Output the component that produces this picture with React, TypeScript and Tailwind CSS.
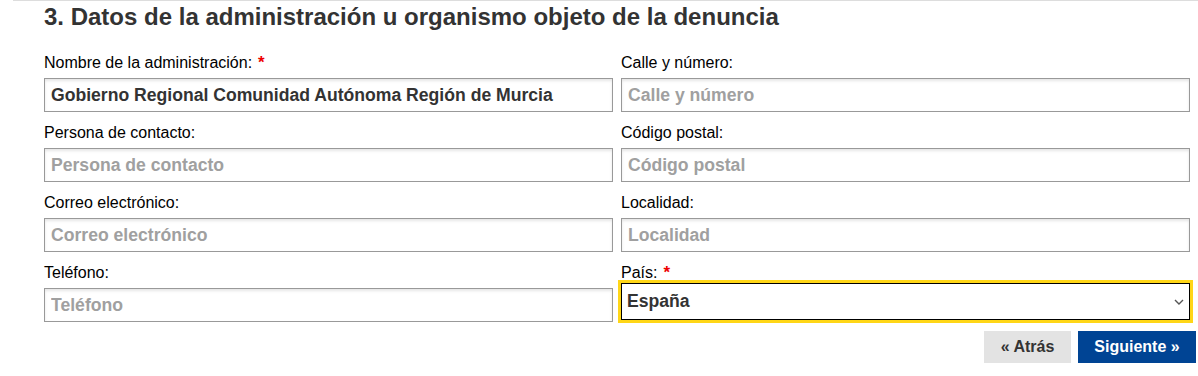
import React from 'react';

type Field = { label: string; value?: string; required?: boolean };

const leftFields: Field[] = [
  { label: 'Nombre de la administración:', value: 'Gobierno Regional Comunidad Autónoma Región de Murcia', required: true },
  { label: 'Persona de contacto:' },
  { label: 'Correo electrónico:' },
  { label: 'Teléfono:' },
];

const rightFields: Field[] = [
  { label: 'Calle y número:' },
  { label: 'Código postal:' },
  { label: 'Localidad:' },
];

const Label: React.FC<{ text: string; required?: boolean }> = ({ text, required }) => (
  <label className="block h-5 leading-5 text-[16px] text-black mb-[5px]">
    {text}
    {required && <span className="text-[#e00] ml-[6px] text-[17px] font-bold">*</span>}
  </label>
);

const TextField: React.FC<{ field: Field }> = ({ field }) => (
  <div>
    <Label text={field.label} required={field.required} />
    <input
      type="text"
      defaultValue={field.value}
      placeholder={field.label.replace(':', '')}
      className="block w-full h-[34px] border border-[#999] bg-white px-[6px] text-[17.6px] font-bold text-[#333] placeholder:text-[#a0a0a0] shadow-[inset_0_2px_3px_rgba(0,0,0,0.1)] outline-none"
    />
  </div>
);

const App: React.FC = () => {
  return (
    <div className="w-[1198px] h-[376px] bg-white overflow-hidden font-['Liberation_Sans',Arial,sans-serif]">
      <div className="ml-[13px] border-t border-[#ddd]">
        <div className="pl-[31px] pr-[2px]">
          <h2 className="text-[24px] leading-[30px] font-bold text-[#333] pt-[1px]">
            3. Datos de la administración u organismo objeto de la denuncia
          </h2>

          <div className="grid grid-cols-2 gap-x-[8px] mt-[21px] pr-[6px]">
            <div className="flex flex-col gap-[11px]">
              {leftFields.map((f) => (
                <TextField key={f.label} field={f} />
              ))}
            </div>
            <div className="flex flex-col gap-[11px]">
              {rightFields.map((f) => (
                <TextField key={f.label} field={f} />
              ))}
              <div>
                <Label text="País:" required />
                <div className="relative -mt-[5px] outline-[3px] outline-solid outline-[#ffd617]">
                  <select
                    defaultValue="es"
                    className="block w-full h-[37px] appearance-none border border-black bg-white px-[5px] text-[17.6px] font-bold text-[#333] outline-none"
                  >
                    <option value="es">España</option>
                  </select>
                  <svg
                    className="absolute right-[6px] top-[16px] pointer-events-none"
                    width="10"
                    height="6"
                    viewBox="0 0 10 6"
                    fill="none"
                  >
                    <path d="M1 1l4 4 4-4" stroke="#555" strokeWidth="1.4" />
                  </svg>
                </div>
              </div>
            </div>
          </div>

          <div className="flex justify-end gap-[7px] mt-[9px]">
            <button className="h-[32px] w-[87px] bg-[#e3e3e3] text-[#333] text-[16px] font-bold">
              « Atrás
            </button>
            <button className="h-[32px] w-[118px] bg-[#004494] text-white text-[16px] font-bold">
              Siguiente »
            </button>
          </div>
        </div>
      </div>
    </div>
  );
};

export default App;
